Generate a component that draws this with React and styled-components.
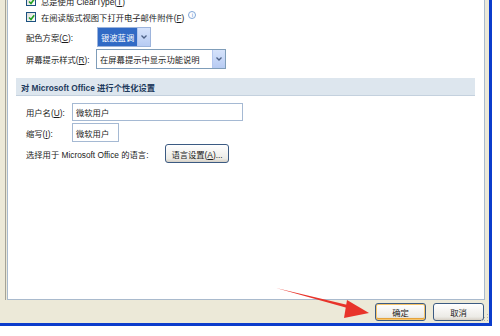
import styled, { createGlobalStyle } from "styled-components";

const GlobalStyle = createGlobalStyle`
  html, body {
    margin: 0;
    padding: 0;
    background: #ffffff;
  }
  body {
    font-family: "Liberation Sans", "Noto Sans CJK SC", sans-serif;
    font-size: 8.3px;
    color: #1b1b1b;
  }
`;

const Stage = styled.div`
  position: relative;
  width: 500px;
  height: 336px;
  overflow: hidden;
`;

const Frame = styled.div`
  display: flex;
  flex-direction: column;
  width: 489px;
  height: 323px;
  background: #ece9d8;
  border-right: 3px solid #0b3ccc;
  border-bottom: 3px solid #0b3ccc;
`;

const Main = styled.div`
  flex: 1;
  display: flex;
  padding: 0 4px 0 5px;
  min-height: 0;
`;

const Pane = styled.div`
  flex: 1;
  display: flex;
  border-left: 1px solid #a5a397;
  padding-left: 1px;
`;

const Panel = styled.div`
  flex: 1;
  background: #ffffff;
  border: 1px solid #a9bacd;
  border-top: none;
  overflow: hidden;
  padding: 0 9px 0 8px;
`;

const Content = styled.div`
  display: flex;
  flex-direction: column;
  margin-top: -7px;
`;

const Row = styled.div`
  display: flex;
  align-items: center;
  height: ${(p) => p.h || 16}px;
  margin-top: ${(p) => p.mt || 0}px;
  padding-left: 10px;
  white-space: nowrap;
`;

const Box = styled.span`
  width: 8px;
  height: 8px;
  border: 1px solid #1c5180;
  background: linear-gradient(135deg, #dcdcd6, #ffffff);
  display: flex;
  align-items: center;
  justify-content: center;
  margin-right: 5px;
`;

const Label = styled.span`
  width: ${(p) => (p.w ? `${p.w}px` : "auto")};
`;

const Info = styled.span`
  width: 6px;
  height: 6px;
  border: 1px solid #7fa6d8;
  border-radius: 50%;
  color: #5b8ccc;
  font-size: 6px;
  line-height: 6px;
  text-align: center;
  margin: -5px 0 0 4px;
`;

const Combo = styled.div`
  display: flex;
  width: ${(p) => p.w}px;
  height: 100%;
  box-sizing: border-box;
  border: 1px solid ${(p) => (p.active ? "#9db4dc" : "#7f9db9")};
  background: #ffffff;
`;

const ComboValue = styled.span`
  flex: 1;
  display: flex;
  align-items: center;
  padding-left: 3px;
  overflow: hidden;
  background: ${(p) => (p.active ? "#316ac5" : "#ffffff")};
  color: ${(p) => (p.active ? "#ffffff" : "#1b1b1b")};
`;

const DropButton = styled.span`
  width: 12px;
  display: flex;
  align-items: center;
  justify-content: center;
  background: linear-gradient(#d6e3fb, #b7cbf3);
  border-left: 1px solid #b4c7ee;
`;

const Header = styled.div`
  display: flex;
  align-items: center;
  height: 17px;
  margin-top: 9px;
  padding-left: 5px;
  background: #dde6ee;
  border-bottom: 1px solid #c4d1de;
  font-weight: bold;
  color: #1e3a5c;
`;

const TextInput = styled.div`
  width: ${(p) => p.w}px;
  height: 100%;
  box-sizing: border-box;
  border: 1px solid #a5b9d3;
  display: flex;
  align-items: center;
  padding-left: 3px;
`;

const XpButton = styled.button`
  width: ${(p) => p.w}px;
  height: ${(p) => p.h || 19}px;
  box-sizing: border-box;
  padding: 0;
  font: inherit;
  color: #1b1b1b;
  border: 1px solid #3b5a82;
  border-radius: 3px;
  background: linear-gradient(#ffffff, #ecebe6 80%, #d6d0c5);
  box-shadow: ${(p) =>
    p.focus ? "inset 0 0 0 1px #f6c46a, inset 0 -1px 0 1px #e5a33b" : "none"};
`;

const Footer = styled.div`
  height: 23px;
  display: flex;
  align-items: center;
  justify-content: flex-end;
  gap: 7px;
  padding-right: 5px;
`;

const Arrow = styled.svg`
  position: absolute;
  left: 270px;
  top: 282px;
`;

const Grip = styled.svg`
  position: absolute;
  left: 480px;
  top: 313px;
`;

const Check = () => (
  <svg width="7" height="7" viewBox="0 0 7 7">
    <path d="M1 3.5 L3 5.5 L6.2 1.2" stroke="#21a121" strokeWidth="1.6" fill="none" />
  </svg>
);

const Chevron = () => (
  <svg width="6" height="4" viewBox="0 0 6 4">
    <path d="M0.5 0.5 L3 3 L5.5 0.5" stroke="#4d6185" strokeWidth="1.3" fill="none" />
  </svg>
);

export default function App() {
  return (
    <Stage>
      <GlobalStyle />
      <Frame>
        <Main>
          <Pane>
            <Panel>
              <Content>
                <Row>
                  <Box><Check /></Box>
                  <span>总是使用 ClearType(<u>T</u>)</span>
                </Row>
                <Row>
                  <Box><Check /></Box>
                  <span>在阅读版式视图下打开电子邮件附件(<u>F</u>)</span>
                  <Info>i</Info>
                </Row>
                <Row h={20} mt={2}>
                  <Label w={71}>配色方案(<u>C</u>):</Label>
                  <Combo w={54} active>
                    <ComboValue active>银波蓝调</ComboValue>
                    <DropButton><Chevron /></DropButton>
                  </Combo>
                </Row>
                <Row h={20} mt={2}>
                  <Label w={70}>屏幕提示样式(<u>R</u>):</Label>
                  <Combo w={130}>
                    <ComboValue>在屏幕提示中显示功能说明</ComboValue>
                    <DropButton><Chevron /></DropButton>
                  </Combo>
                </Row>
                <Header>对 Microsoft Office 进行个性化设置</Header>
                <Row h={18} mt={7}>
                  <Label w={46}>用户名(<u>U</u>):</Label>
                  <TextInput w={171}>微软用户</TextInput>
                </Row>
                <Row h={19} mt={2}>
                  <Label w={46}>缩写(<u>I</u>):</Label>
                  <TextInput w={47}>微软用户</TextInput>
                </Row>
                <Row h={19} mt={2}>
                  <Label w={139}>选择用于 Microsoft Office 的语言:</Label>
                  <XpButton w={64}>语言设置(<u>A</u>)...</XpButton>
                </Row>
              </Content>
            </Panel>
          </Pane>
        </Main>
        <Footer>
          <XpButton w={51} h={18} focus>确定</XpButton>
          <XpButton w={51} h={18}>取消</XpButton>
        </Footer>
      </Frame>
      <Arrow width="105" height="40" viewBox="0 0 105 40">
        <path d="M6 6 L82 24 L81 27 Z" fill="#e8332a" />
        <path d="M99 31 L77 18 L74 36 Z" fill="#e8332a" />
      </Arrow>
      <Grip width="10" height="10" viewBox="0 0 10 10">
        <rect x="7" y="1" width="1" height="1" fill="#b8b4a2" />
        <rect x="4" y="4" width="1" height="1" fill="#b8b4a2" />
        <rect x="7" y="4" width="1" height="1" fill="#b8b4a2" />
        <rect x="1" y="7" width="1" height="1" fill="#b8b4a2" />
        <rect x="4" y="7" width="1" height="1" fill="#b8b4a2" />
        <rect x="7" y="7" width="1" height="1" fill="#b8b4a2" />
      </Grip>
    </Stage>
  );
}
